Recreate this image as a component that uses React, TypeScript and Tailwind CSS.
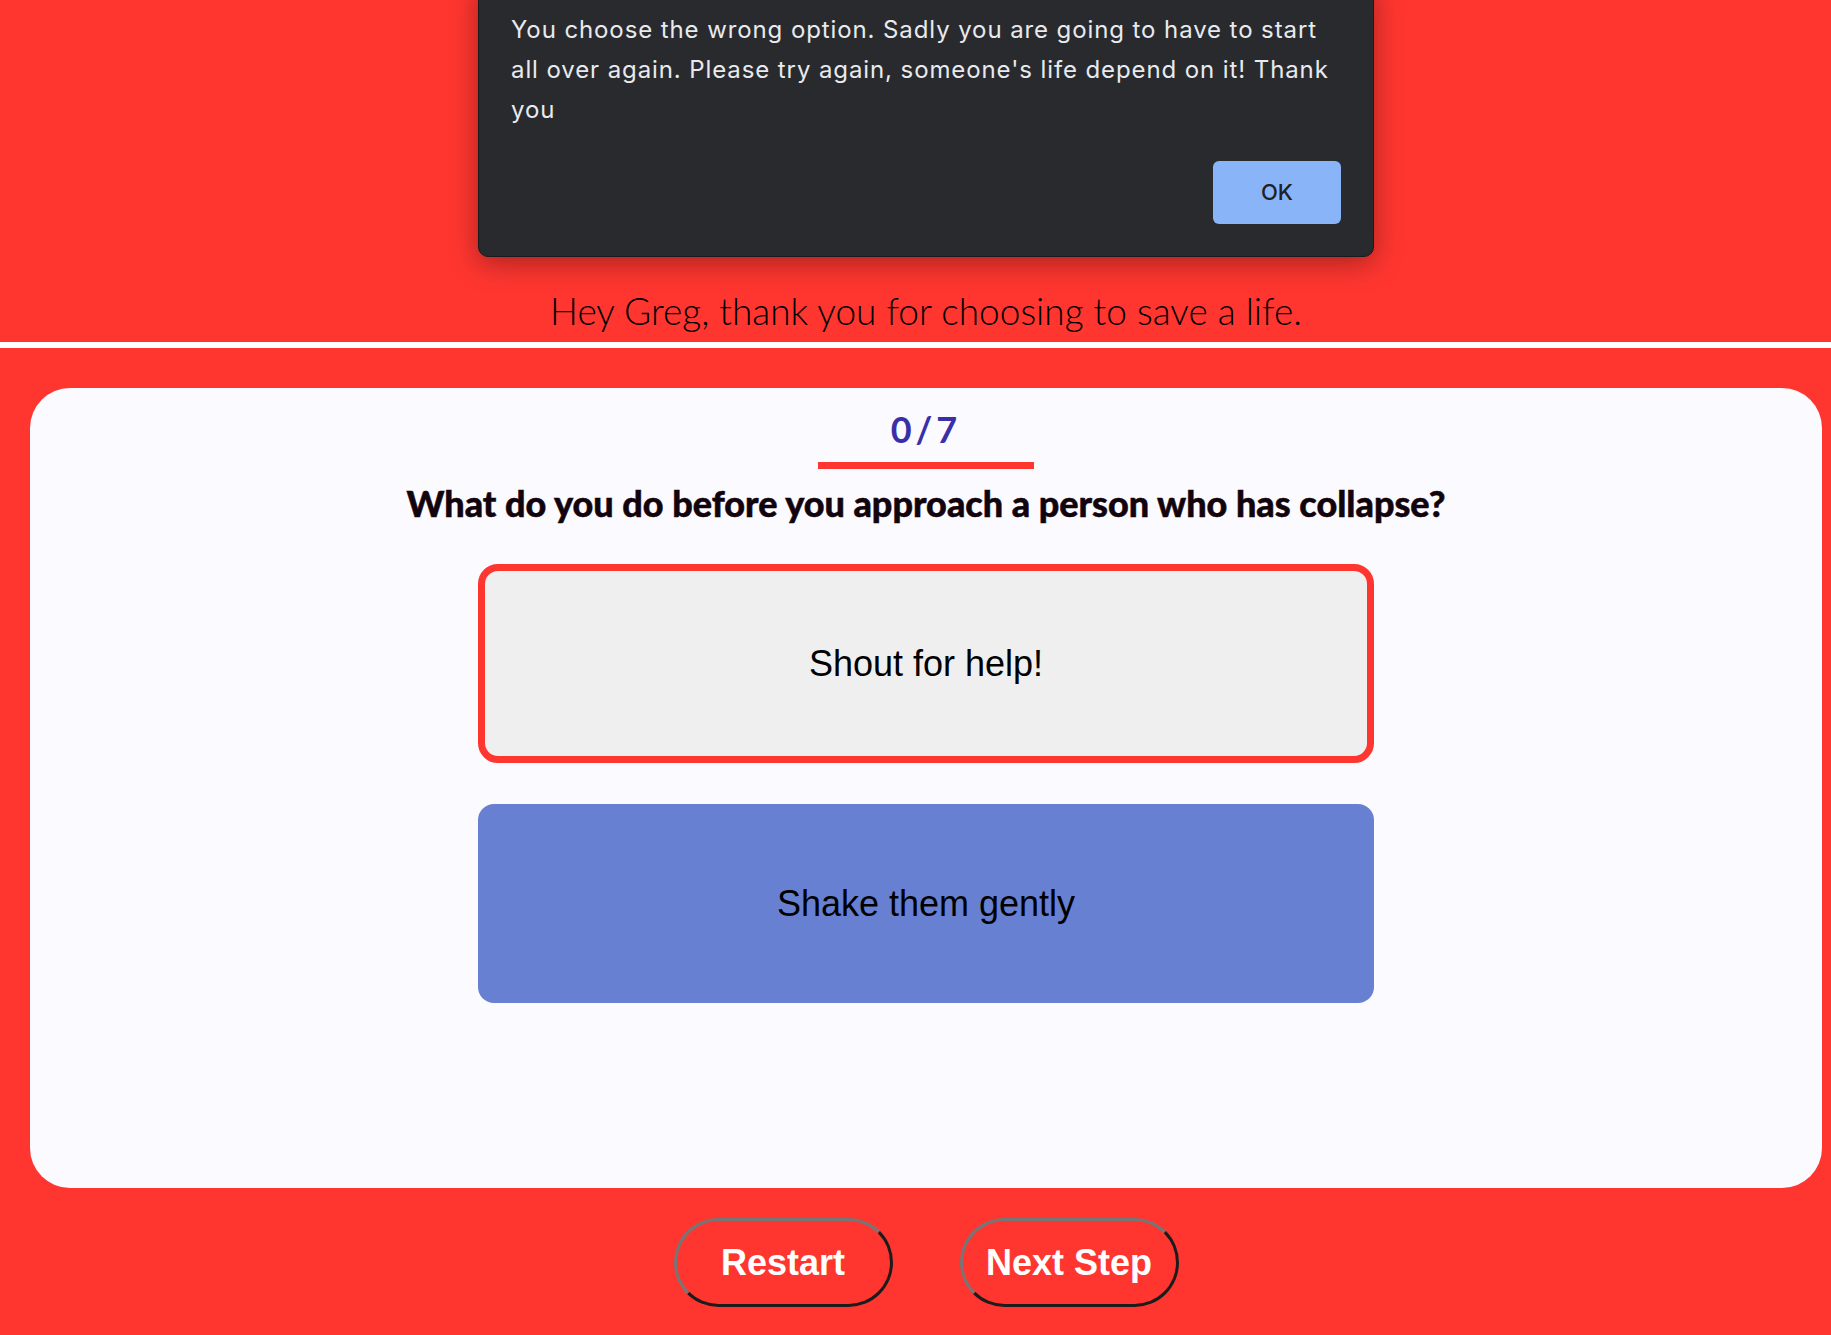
import React from "react";

const options = [
  { label: "Shout for help!", selected: true },
  { label: "Shake them gently", selected: false },
];

function AlertDialog() {
  return (
    <div className="absolute left-[478px] top-[-20px] z-20 w-[896px] rounded-[10px] border border-[#1a1b1e] bg-[#292a2d] pl-[32px] pr-[32px] pb-[32px] pt-[29px] shadow-[0_6px_28px_rgba(0,0,0,0.35)]">
      <p className="font-['Inter',sans-serif] text-[24px] leading-[40px] tracking-[0.9px] text-[#e8eaed]">
        You choose the wrong option. Sadly you are going to have to start all over again. Please try again, someone's life depend on it! Thank you
      </p>
      <div className="mt-[31px] flex justify-end">
        <button className="h-[63px] w-[128px] rounded-[6px] bg-[#8ab4f8] font-['Inter',sans-serif] text-[22px] font-medium text-[#202124]">
          OK
        </button>
      </div>
    </div>
  );
}

function RoundButton({ children }: { children: React.ReactNode }) {
  return (
    <button className="h-[89px] w-[219px] rounded-full border-[3px] border-t-[#767676] border-l-[#767676] border-b-[#1c1c1c] border-r-[#1c1c1c] bg-[#ff3630] font-['Liberation_Sans',Arial,sans-serif] text-[36px] font-bold text-white">
      {children}
    </button>
  );
}

export default function App() {
  return (
    <div className="relative min-h-screen overflow-hidden bg-[#ff3630]">
      <AlertDialog />

      <header className="flex h-[342px] items-end justify-center pb-[9px] pl-[30px] pr-[9px]">
        <h2 className="font-['Lato',sans-serif] text-[37px] font-light leading-[44px] text-black">
          Hey Greg, thank you for choosing to save a life.
        </h2>
      </header>
      <div className="h-[6px] bg-white" />

      <main className="pl-[30px] pr-[9px] pt-[40px]">
        <section className="flex h-[800px] flex-col items-center rounded-[40px] bg-[#fafaff] pt-[20px]">
          <div className="font-['Lato',sans-serif] text-[36px] font-bold leading-[43px] tracking-[4px] text-[#3a2fa8]">
            0/7
          </div>
          <div className="mt-[11px] h-[7px] w-[216px] bg-[#ff3630]" />
          <h3 className="mt-[14px] font-['Lato',sans-serif] text-[36px] font-black leading-[40px] text-[#12040c] [-webkit-text-stroke:0.5px_#12040c]">
            What do you do before you approach a person who has collapse?
          </h3>

          <div className="mt-[41px] flex w-[896px] flex-col gap-[41px]">
            {options.map((o) =>
              o.selected ? (
                <button
                  key={o.label}
                  className="h-[199px] rounded-[20px] border-[7px] border-[#ff3630] bg-[#efefef] font-['Liberation_Sans',Arial,sans-serif] text-[36px] text-black"
                >
                  {o.label}
                </button>
              ) : (
                <button
                  key={o.label}
                  className="h-[199px] rounded-[16px] bg-[#6880d1] font-['Liberation_Sans',Arial,sans-serif] text-[36px] text-black"
                >
                  {o.label}
                </button>
              )
            )}
          </div>
        </section>

        <div className="flex justify-center gap-[67px] pt-[30px] pb-[28px]">
          <RoundButton>Restart</RoundButton>
          <RoundButton>Next Step</RoundButton>
        </div>
      </main>
    </div>
  );
}
